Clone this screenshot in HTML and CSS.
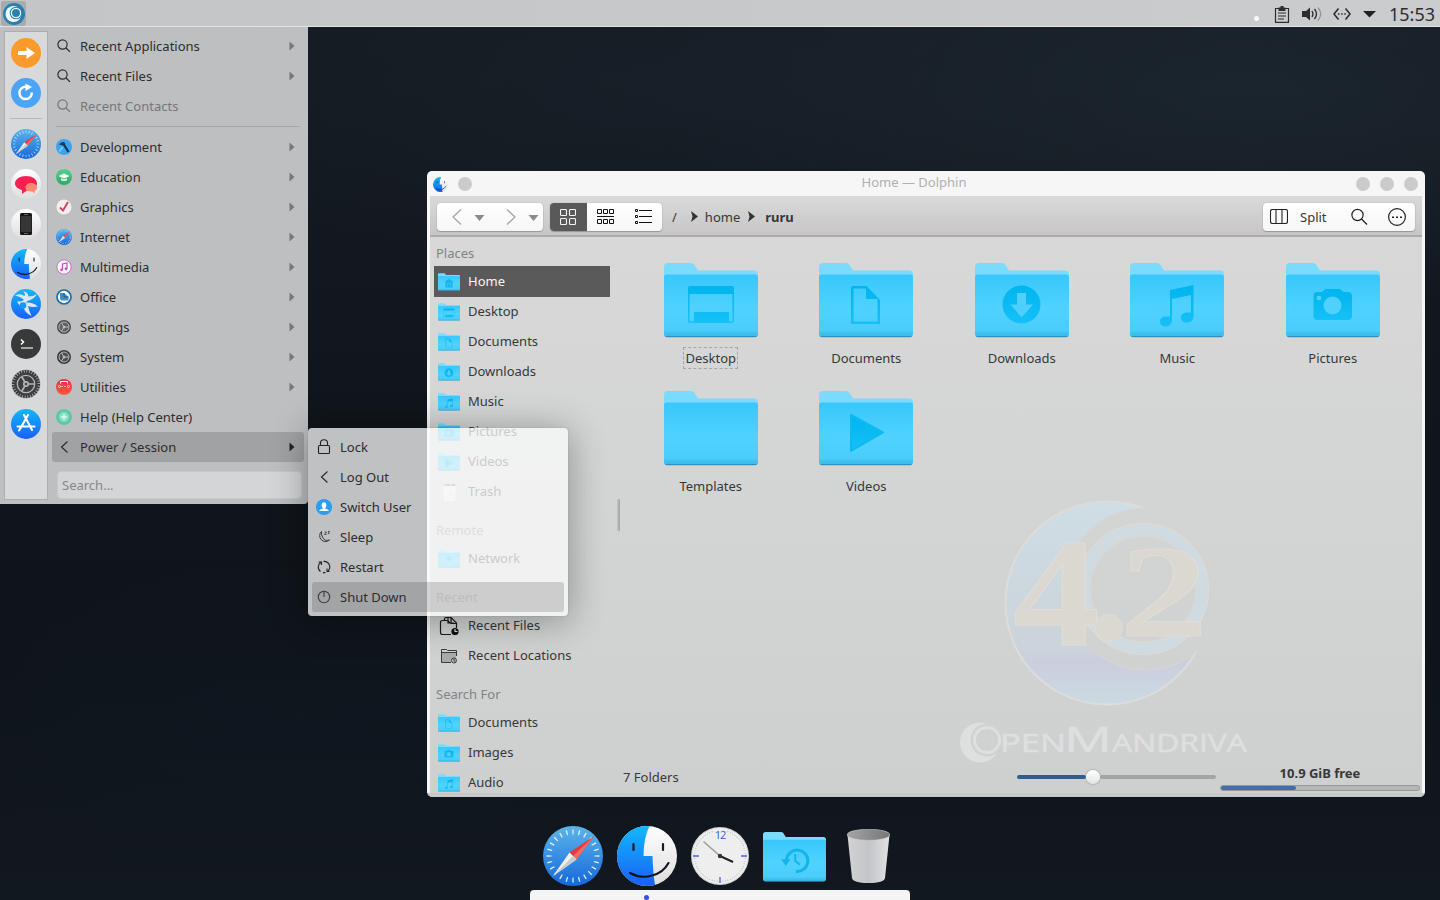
FILE: index.html
```html
<!DOCTYPE html>
<html lang="en">
<head>
<meta charset="utf-8">
<title>Desktop</title>
<link rel="stylesheet" href="styles.css">
</head>
<body>
<svg class="defs" width="0" height="0" aria-hidden="true">
  <defs>
    <linearGradient id="gFolder" x1="0" y1="0" x2="0" y2="1"><stop offset="0" stop-color="#38c7fc"/><stop offset=".55" stop-color="#50d2ff"/><stop offset=".9" stop-color="#4acdfb"/><stop offset=".93" stop-color="#3fc2f2"/><stop offset="1" stop-color="#3abae8"/></linearGradient>
    <linearGradient id="gGlyph" x1="0" y1="0" x2="0" y2="1"><stop offset="0" stop-color="#00b5ee"/><stop offset="1" stop-color="#16c0f8"/></linearGradient>
    <linearGradient id="gSafari" x1="0" y1="0" x2="0" y2="1"><stop offset="0" stop-color="#5bb5ea"/><stop offset="1" stop-color="#1668dc"/></linearGradient>
    <linearGradient id="gBlue" x1="0" y1="0" x2="0" y2="1"><stop offset="0" stop-color="#12b8fd"/><stop offset="1" stop-color="#1a60f5"/></linearGradient>
    <linearGradient id="gWhite" x1="0" y1="0" x2="0" y2="1"><stop offset="0" stop-color="#fff"/><stop offset="1" stop-color="#dfdcdc"/></linearGradient>
    <linearGradient id="gPink" x1="0" y1="0" x2="0" y2="1"><stop offset="0" stop-color="#ff1c55"/><stop offset="1" stop-color="#f5254b"/></linearGradient>
    <linearGradient id="gGreen" x1="0" y1="0" x2="0" y2="1"><stop offset="0" stop-color="#52d18a"/><stop offset="1" stop-color="#2fa866"/></linearGradient>
    <linearGradient id="gRed" x1="0" y1="0" x2="0" y2="1"><stop offset="0" stop-color="#e8304d"/><stop offset="1" stop-color="#fb5a38"/></linearGradient>
    <linearGradient id="gBin" x1="0" y1="0" x2="1" y2="0"><stop offset="0" stop-color="#d2d2d4"/><stop offset=".5" stop-color="#c4c5c8"/><stop offset="1" stop-color="#e2e2e3"/></linearGradient>
    <linearGradient id="gBinIn" x1="0" y1="0" x2="1" y2="0"><stop offset="0" stop-color="#a5a5a5"/><stop offset="1" stop-color="#767676"/></linearGradient>
    <linearGradient id="gLogo" x1="0" y1="0" x2="0" y2="1"><stop offset="0" stop-color="#cfdde4"/><stop offset=".7" stop-color="#cbd4da"/><stop offset=".8" stop-color="#cbcedd"/><stop offset="1" stop-color="#cbdae3"/></linearGradient>
  </defs>

  <symbol id="folder" viewBox="0 0 94 75">
    <path d="M0 16V4Q0 0 4 0H27Q29 0 30.5 2L34 7.5H90Q94 7.5 94 11.5V20H0Z" fill="#7adbfd"/>
    <path d="M0 14Q0 11.500 3 11.500H91Q94 11.500 94 14V71Q94 74 91 74H3Q0 74 0 71Z" fill="url(#gFolder)"/>
    <path d="M.8 73Q1.500 74.200 3.500 74.200H90.500Q92.500 74.200 93.200 73Z" fill="#3192c0"/>
  </symbol>
  <symbol id="g-desktop" viewBox="0 0 94 75"><path d="M26 23H68Q70 23 70 25V58Q70 60 68 60H26Q24 60 24 58V25Q24 23 26 23ZM25.500 31V57.500L26 58.500H30V49H65V58.500H68.500V31Z" fill="url(#gGlyph)" fill-rule="evenodd"/></symbol>
  <symbol id="g-doc" viewBox="0 0 94 75"><path d="M34 23H47.500L61 37V61H32V25Q32 23 34 23ZM34.500 25.500V58.500H58.500V36H47V25.500Z" fill="url(#gGlyph)" fill-rule="evenodd"/></symbol>
  <symbol id="g-down" viewBox="0 0 94 75"><circle cx="46.500" cy="41.500" r="19" fill="url(#gGlyph)"/><path d="M42 30H51V41.500H58L46.500 54.500L35.500 41.500H42Z" fill="#4fcffd"/></symbol>
  <symbol id="g-music" viewBox="0 0 94 75"><path d="M40 27L63.500 22V53C63.500 57 61 59.500 57 59.500C53 59.500 51 57.500 51 54.500C51 51 54 49.500 57 49.500H61V32L42 36V57C42 61 39 63.500 35.500 63.500C32 63.500 30 61.500 30 58.500C30 55 33 53.500 36 53.500H40Z" fill="url(#gGlyph)"/></symbol>
  <symbol id="g-camera" viewBox="0 0 94 75"><path d="M31 29H36L39.500 26H54L57.500 29H62Q66 29 66 33V53Q66 57 62 57H31.500Q27.500 57 27.500 53V33Q27.500 29 31 29Z" fill="url(#gGlyph)"/><circle cx="46.500" cy="42.500" r="9" fill="#50d0fd"/><circle cx="33" cy="35" r="2.300" fill="#50d0fd"/></symbol>
  <symbol id="g-play" viewBox="0 0 94 75"><path d="M32 24L64 41.500L32 60Z" fill="url(#gGlyph)" stroke="#0bbaf2" stroke-width="2" stroke-linejoin="round"/></symbol>
  <symbol id="g-home" viewBox="0 0 94 75"><path d="M47 24L66 38H62V61H32V38H28Z" fill="#14b4ea"/><path d="M38 42H56M41 42V58M53 42V58" stroke="#3fc8f8" stroke-width="3"/></symbol>
  <symbol id="g-net" viewBox="0 0 94 75"><path d="M32 32Q47 22 62 32L47 48Z" fill="#14b9f0"/></symbol>
  <symbol id="g-history" viewBox="0 0 94 75"><path d="M35 42A16 16 0 1 1 49 59" fill="none" stroke="#12b5ea" stroke-width="4.500"/><path d="M27 41H41L34 51Z" fill="#12b5ea"/><path d="M48 33V43L55 49" fill="none" stroke="#12b5ea" stroke-width="3"/></symbol>

  <symbol id="safari" viewBox="0 0 60 60">
    <circle cx="30" cy="30" r="30" fill="url(#gSafari)"/>
    <circle cx="30" cy="30" r="24" fill="none" stroke="#e9f3fc" stroke-width="5" pathLength="240" stroke-dasharray="2 8" stroke-dashoffset="1"/>
    <path d="M51 10L33.500 33.500L26.500 26.500Z" fill="#e53b3d"/><path d="M51 10L30 30L33.500 33.500Z" fill="#f36a62"/>
    <path d="M10 50L33.500 33.500L26.500 26.500Z" fill="#f4f2ee"/><path d="M10 50L30 30L33.500 33.500Z" fill="#c5cbd0"/>
  </symbol>
  <symbol id="finder" viewBox="0 0 60 60">
    <circle cx="30" cy="30" r="30" fill="url(#gWhite)"/>
    <path d="M32.500 .1A30 30 0 1 0 38 58.900Q36 47 35.500 30H26.500Q26.500 12 32.500 .1Z" fill="url(#gBlue)"/>
    <path d="M16.500 18V24M46 18V24" stroke="#111b2e" stroke-width="2.200" stroke-linecap="round"/>
    <path d="M13 47Q24 53 35 49.500Q46 47 51.500 37" fill="none" stroke="#10131c" stroke-width="2.100" stroke-linecap="round"/>
  </symbol>
  <symbol id="cog" viewBox="0 0 30 30">
    <circle cx="15" cy="15" r="14.500" fill="#a9abac"/><circle cx="15" cy="15" r="12.500" fill="none" stroke="#333537" stroke-width="3" pathLength="60" stroke-dasharray="1.300 .7"/>
    <circle cx="15" cy="15" r="11.500" fill="#3c3e40"/><circle cx="15" cy="15" r="8.700" fill="#3c3e40" stroke="#b4b6b7" stroke-width="1.300"/>
    <path d="M15 15H23.500M15 15L10.700 7.600M15 15L10.700 22.400" stroke="#b4b6b7" stroke-width="1.700"/><circle cx="15" cy="15" r="3" fill="#b4b6b7"/><circle cx="15" cy="15" r="1.300" fill="#444"/>
  </symbol>
  <symbol id="cog-small" viewBox="0 0 16 16">
    <circle cx="8" cy="8" r="7" fill="#35383a"/><circle cx="8" cy="8" r="5" fill="#4b4e50" stroke="#b9bbbc" stroke-width="1"/>
    <path d="M8 8H12.800M8 8L5.600 4M8 8L5.600 12" stroke="#b9bbbc" stroke-width="1"/><circle cx="8" cy="8" r="1.500" fill="#b9bbbc"/>
  </symbol>
  <symbol id="lens" viewBox="0 0 16 16"><circle cx="6.500" cy="6.500" r="4.600" fill="none" stroke="currentColor" stroke-width="1.200"/><path d="M9.800 9.800L14 13.900" stroke="currentColor" stroke-width="1.300"/></symbol>
  <symbol id="back" viewBox="0 0 16 16"><path d="M11.500 2.500L5.500 8L11.500 13.500" fill="none" stroke="currentColor" stroke-width="1.200"/></symbol>
  <symbol id="arrow" viewBox="0 0 6 10"><path d="M.5 .5L5.500 5L.5 9.500Z" fill="currentColor"/></symbol>
</svg>

<main class="desktop">

  <section class="window">
    <header class="titlebar">
      <svg class="app-icon"><use href="#finder"/></svg>
      <span class="knob"></span>
      <h1 class="title">Home — Dolphin</h1>
      <span class="knob"></span><span class="knob"></span><span class="knob"></span>
    </header>
    <div class="toolbar">
      <div class="group nav-group">
        <svg width="106" height="28" viewBox="0 0 106 28"><path d="M24 6.500L16 14L24 21.500M70 6.500L78 14L70 21.500" fill="none" stroke="#a3a3a3" stroke-width="1.200"/><path d="M37.500 12H47.500L42.500 18ZM91.500 12H101.500L96.500 18Z" fill="#8b8b8b"/></svg>
      </div>
      <div class="group view-group">
        <div class="view active"><svg width="16" height="16" viewBox="0 0 16 16" fill="none" stroke="#f4f4f4" stroke-width="1.100"><rect x=".5" y=".5" width="6" height="6" rx="1"/><rect x="9.500" y=".5" width="6" height="6" rx="1"/><rect x=".5" y="9.500" width="6" height="6" rx="1"/><rect x="9.500" y="9.500" width="6" height="6" rx="1"/></svg></div>
        <div class="view"><svg width="17" height="16" viewBox="0 0 17 16" fill="none" stroke="#111"><path d="M.5 .5H4.500V4.500H.5ZM6.500 .5H10.500V4.500H6.500ZM12.500 .5H16.500V4.500H12.500ZM0 7.500H17M.5 10.500H4.500V14.500H.5ZM6.500 10.500H10.500V14.500H6.500ZM12.500 10.500H16.500V14.500H12.500Z"/></svg></div>
        <div class="view"><svg width="17" height="16" viewBox="0 0 17 16" fill="none" stroke="#111"><path d="M.5 .5H2.500V2.500H.5ZM.5 6.500H2.500V8.500H.5ZM.5 12.500H2.500V14.500H.5ZM4 1.500H17M4 7.500H17M4 13.500H17"/></svg></div>
      </div>
      <nav class="crumbs">
        <span>/</span>
        <svg class="c1" width="7" height="11" viewBox="0 0 7 11"><path d="M0 0L7 5.500L0 11L1.500 5.500Z" fill="#333"/></svg>
        <span>home</span>
        <svg class="c2" width="7" height="11" viewBox="0 0 7 11"><path d="M0 0L7 5.500L0 11L1.500 5.500Z" fill="#333"/></svg>
        <b>ruru</b>
      </nav>
      <div class="group tools-group">
        <svg width="18" height="16" viewBox="0 0 18 16" fill="none" stroke="#222" stroke-width="1.100"><rect x=".5" y=".5" width="17" height="14" rx="2"/><path d="M6 .5V14.500M12 .5V14.500"/></svg>
        <span>Split</span>
        <svg class="find" width="18" height="18" viewBox="0 0 18 18" fill="none" stroke="#222" stroke-width="1.200"><circle cx="7.500" cy="7" r="5.600"/><path d="M11.500 11L17 16.500"/></svg>
        <svg width="18" height="18" viewBox="0 0 18 18"><circle cx="9" cy="9" r="8.400" fill="none" stroke="#222" stroke-width="1.200"/><path d="M4 8.500H6V10H4ZM8 8.500H10V10H8ZM12 8.500H14V10H12Z" fill="#222"/></svg>
      </div>
    </div>
    <div class="body">
      <aside class="places">
        <h2 class="first">Places</h2>
        <div class="place selected"><svg><use href="#folder"/><use href="#g-home"/></svg>Home</div>
        <div class="place"><svg><use href="#folder"/><use href="#g-desktop"/></svg>Desktop</div>
        <div class="place"><svg><use href="#folder"/><use href="#g-doc"/></svg>Documents</div>
        <div class="place"><svg><use href="#folder"/><use href="#g-down"/></svg>Downloads</div>
        <div class="place"><svg><use href="#folder"/><use href="#g-music"/></svg>Music</div>
        <div class="place"><svg><use href="#folder"/><use href="#g-camera"/></svg>Pictures</div>
        <div class="place"><svg><use href="#folder"/><use href="#g-play"/></svg>Videos</div>
        <div class="place"><svg viewBox="0 0 22 18"><path d="M5 3H18L17 18H6Z" fill="#ececec"/><path d="M5 1L8 2L10 .5L13 2L15 .5L18 2L17 3L13 2.500L9 3L6 2.500Z" fill="#6f6f6f"/><path d="M12 8L14 10L11 13" stroke="#d4d4d4" fill="none"/></svg>Trash</div>
        <h2>Remote</h2>
        <div class="place"><svg><use href="#folder"/><use href="#g-net"/></svg>Network</div>
        <h2>Recent</h2>
        <div class="place"><svg viewBox="0 0 22 18" fill="none" stroke="#1b1b1b" stroke-width="1.200"><path d="M13 17.500H4.500Q2.500 17.500 2.500 15.500V5.500Q2.500 3.500 4.500 3.500H6.500V2.500Q6.500 .5 8.500 .5H13L18.500 6V11M10 .5V6H16M13 .5V6.500H18.500M6.500 3.500H10L12 6"/><circle cx="17" cy="14.500" r="3.600" fill="#111" stroke="none"/><path d="M17 12V14.500H19.500" stroke="#ddd"/></svg>Recent Files</div>
        <div class="place"><svg viewBox="0 0 22 18" fill="none" stroke="#3b3b3b"><path d="M13 15.500H3.500V2.500H8.500L9.500 3.500H18.500V9M3.500 5.500H18.500" /><path d="M4 6H18V15H4Z" fill="#a9aaab" stroke="none"/><circle cx="16" cy="13.500" r="2.500" fill="#c4c4c4"/><path d="M16 12V14H17.500"/></svg>Recent Locations</div>
        <h2>Search For</h2>
        <div class="place"><svg><use href="#folder"/><use href="#g-doc"/></svg>Documents</div>
        <div class="place"><svg><use href="#folder"/><use href="#g-camera"/></svg>Images</div>
        <div class="place"><svg><use href="#folder"/><use href="#g-music"/></svg>Audio</div>
      </aside>
      <div class="splitter"></div>
      <div class="content">
        <svg class="watermark" width="300" height="280" viewBox="950 495 300 280">
          <defs><mask id="mCres"><rect x="950" y="495" width="300" height="280" fill="#fff"/><circle cx="1144" cy="589" r="81" fill="#000"/></mask></defs>
          <circle cx="1106" cy="603" r="101.500" fill="url(#gLogo)" stroke="#dcdddb" stroke-width="2" mask="url(#mCres)"/>
          <path d="M1150 508.200A81 81 0 1 0 1198 650" fill="none" stroke="#d9d6d3"/>
          <circle cx="1142" cy="589" r="59.500" fill="none" stroke="#cfdbe1" stroke-width="12"/>
          <circle cx="1142" cy="589" r="65.500" fill="none" stroke="#dadad6" stroke-width="1.500"/>
          <circle cx="1142" cy="589" r="53" fill="none" stroke="#d9d9d5" stroke-width="1.500"/>
          <g class="version">
            <text transform="translate(1012 644.500) scale(1.120 1)" font-size="155">4</text>
            <circle cx="1108" cy="628" r="13.500"/>
            <text transform="translate(1119 636) scale(1.340 1)" font-size="131">2</text>
          </g>
          <circle cx="979" cy="742.500" r="20" fill="#dedfdf"/>
          <circle cx="986" cy="740" r="16.500" fill="#d0d1d1"/>
          <circle cx="986" cy="740" r="12.500" fill="none" stroke="#dedfdf" stroke-width="3"/>
          <g class="brand">
            <text x="999" y="752" font-size="25" textLength="66" lengthAdjust="spacingAndGlyphs">PEN</text>
            <text x="1063" y="752" font-size="34" textLength="48" lengthAdjust="spacingAndGlyphs">M</text>
            <text x="1111" y="752" font-size="25" textLength="135" lengthAdjust="spacingAndGlyphs">ANDRIVA</text>
          </g>
        </svg>
        <div class="files">
          <figure class="file focus"><svg><use href="#folder"/><use href="#g-desktop"/></svg><figcaption>Desktop</figcaption></figure>
          <figure class="file"><svg><use href="#folder"/><use href="#g-doc"/></svg><figcaption>Documents</figcaption></figure>
          <figure class="file"><svg><use href="#folder"/><use href="#g-down"/></svg><figcaption>Downloads</figcaption></figure>
          <figure class="file"><svg><use href="#folder"/><use href="#g-music"/></svg><figcaption>Music</figcaption></figure>
          <figure class="file"><svg><use href="#folder"/><use href="#g-camera"/></svg><figcaption>Pictures</figcaption></figure>
          <figure class="file"><svg><use href="#folder"/></svg><figcaption>Templates</figcaption></figure>
          <figure class="file"><svg><use href="#folder"/><use href="#g-play"/></svg><figcaption>Videos</figcaption></figure>
        </div>
        <footer class="status">
          <span class="count">7 Folders</span>
          <div class="slider"><span class="fill"></span><span class="handle"></span><span class="rest"></span></div>
          <div class="space"><b>10.9 GiB free</b><div class="bar"><span></span></div></div>
        </footer>
      </div>
    </div>
  </section>

  <header class="panel">
    <div class="launcher"><svg width="22" height="22" viewBox="0 0 22 22"><circle cx="11" cy="11" r="11" fill="#2a7fb2"/><circle cx="10.500" cy="11" r="8" fill="#f4f8fa"/><circle cx="13" cy="10" r="6.300" fill="#2a7fb2"/><circle cx="13" cy="10" r="4.600" fill="none" stroke="#f4f8fa" stroke-width="1.300"/></svg></div>
    <div class="tray">
      <span class="dot"></span>
      <svg class="clip" width="16" height="17" viewBox="0 0 16 17"><path d="M1.500 2.500H14.500V16.300H1.500Z" fill="none" stroke="#2b2d2f" stroke-width="1.200"/><path d="M4.500 1.500H6.500V0H9.500V1.500H11.500V5H4.500ZM4 6.500H12V7.500H4ZM4 9.500H12V10.500H4ZM4 12.500H10V13.500H4Z" fill="#2b2d2f"/></svg>
      <svg class="vol" width="21" height="16" viewBox="0 0 21 16"><path d="M0 5H4L8 1.500V14.500L4 11H0Z" fill="#2b2d2f"/><path d="M10 5Q12 8 10 11M12.500 3Q16.500 8 12.500 13" fill="none" stroke="#2b2d2f" stroke-width="1.300"/><path d="M16 1.500Q21.500 8 16 14.500" fill="none" stroke="#909294" stroke-width="1.200"/></svg>
      <svg class="net" width="18" height="14" viewBox="0 0 18 14"><path d="M5.500 1.500L1 7L5.500 12.500M12.500 1.500L17 7L12.500 12.500" fill="none" stroke="#2b2d2f" stroke-width="1.600"/><path d="M5 6.200H6.500V7.700H5ZM8.200 6.200H9.700V7.700H8.200ZM11.300 6.200H12.800V7.700H11.300Z" fill="#2b2d2f"/></svg>
      <svg class="tri" width="13" height="7" viewBox="0 0 13 7"><path d="M0 0H13L6.500 6.500Z" fill="#1f2123"/></svg>
      <time>15:53</time>
    </div>
  </header>

  <section class="menu">
    <aside class="favorites">
      <svg viewBox="0 0 30 30"><circle cx="15" cy="15" r="15" fill="#fc9a2b"/><path d="M7 13H15.500V9L24 15L15.500 21V17H7Z" fill="#fff"/></svg>
      <svg viewBox="0 0 30 30"><circle cx="15" cy="15" r="15" fill="#4ba4f5"/><path d="M20.800 14.500A6.200 6.200 0 1 1 15 8.700" fill="none" stroke="#fff" stroke-width="2.500"/><path d="M14.500 5.500L21 9L14.500 13Z" fill="#fff"/></svg>
      <hr>
      <svg><use href="#safari"/></svg>
      <svg viewBox="0 0 30 30"><circle cx="15" cy="15" r="15" fill="url(#gWhite)"/><path d="M15 7C21 7 26 10 26 14.500C26 19 21 21.500 16 21.500L11 25V21C7 20 4 17.500 4 14.500C4 10 9 7 15 7Z" fill="url(#gPink)"/><path d="M20 14C23.500 14 26 16 26 18.500C26 20 25 21.500 23.500 22V24.500L21 22.500C16.500 22.500 14.500 21 14.500 18.500C14.500 16 17 14 20 14Z" fill="#ff8a70"/></svg>
      <svg viewBox="0 0 30 30"><circle cx="15" cy="15" r="15" fill="url(#gWhite)"/><rect x="9" y="4" width="12" height="22" rx="1.500" fill="#161616"/><path d="M9.700 7H20.300V23H9.700Z" fill="#353638"/><path d="M13 24.500H17M13 5.500H17" stroke="#666"/></svg>
      <svg><use href="#finder"/></svg>
      <svg viewBox="0 0 30 30"><circle cx="15" cy="15" r="15" fill="url(#gBlue)"/><path d="M4 6.500Q9 4 13.500 7Q15 4 11.500 2.500Q17 2.500 17.500 7.500Q22 7.500 26 5Q24 9.500 16.500 12L14.500 13.500Q22 13 27 17.500Q21 18.500 17 17Q18 22 20.500 27Q14 23.500 13 19.500Q9 18 6 12.500Q10 13 13 11Q10 7.500 4 6.500Z" fill="#dce6ee"/><circle cx="12" cy="16.500" r="3.300" fill="#1796f5"/></svg>
      <svg viewBox="0 0 30 30"><circle cx="15" cy="15" r="15" fill="#383939"/><path d="M10 10.500L12.500 13L10 15.500" fill="none" stroke="#fff" stroke-width="1.500"/><path d="M10 19H22" stroke="#d6d6d6" stroke-width="1.400"/></svg>
      <svg><use href="#cog"/></svg>
      <svg viewBox="0 0 30 30"><circle cx="15" cy="15" r="15" fill="url(#gBlue)"/><path d="M13 6L21 21M17 6L9 20M6.500 17.500H17M20 17.500H23.500M9 20L8 21.500" fill="none" stroke="#fff" stroke-width="2.100" stroke-linecap="round"/></svg>
    </aside>
    <div class="menu-main">
      <div class="item"><svg><use href="#lens"/></svg><span>Recent Applications</span><svg class="more"><use href="#arrow"/></svg></div>
      <div class="item"><svg><use href="#lens"/></svg><span>Recent Files</span><svg class="more"><use href="#arrow"/></svg></div>
      <div class="item disabled"><svg><use href="#lens"/></svg><span>Recent Contacts</span></div>
      <hr>
      <div class="item"><svg viewBox="0 0 16 16"><circle cx="8" cy="8" r="8" fill="#37a5f3"/><path d="M3 5.500Q4.500 2.500 8 3L9.500 5L7 6.500Z" fill="#263746"/><path d="M7.500 5L12.500 13" fill="none" stroke="#20323f" stroke-width="2.200"/><path d="M6.500 8L3.500 12.500" stroke="#8ecbf2" stroke-width="1.500"/></svg><span>Development</span><svg class="more"><use href="#arrow"/></svg></div>
      <div class="item"><svg viewBox="0 0 16 16"><circle cx="8" cy="8" r="8" fill="url(#gGreen)"/><path d="M2.500 7L8 4.500L13.500 7L8 9.500Z" fill="#fff"/><path d="M5 9.200V11.300Q8 12.800 11 11.300V9.200L8 10.500Z" fill="#e9f7ee"/></svg><span>Education</span><svg class="more"><use href="#arrow"/></svg></div>
      <div class="item"><svg viewBox="0 0 16 16"><circle cx="8" cy="8" r="7.500" fill="#f2eeee"/><path d="M4 8.500L7 11.500L12 3" fill="none" stroke="#d6405c" stroke-width="1.900"/></svg><span>Graphics</span><svg class="more"><use href="#arrow"/></svg></div>
      <div class="item"><svg><use href="#safari"/></svg><span>Internet</span><svg class="more"><use href="#arrow"/></svg></div>
      <div class="item"><svg viewBox="0 0 16 16"><circle cx="8" cy="8" r="7.200" fill="#fbf5fb" stroke="#c271c9" stroke-width="1"/><path d="M6.500 10.700V5L11 4V9.700" fill="none" stroke="#c14fb8" stroke-width="1.200"/><circle cx="5.500" cy="10.800" r="1.400" fill="#d6519a"/><circle cx="10" cy="9.800" r="1.400" fill="#b04fc8"/></svg><span>Multimedia</span><svg class="more"><use href="#arrow"/></svg></div>
      <div class="item"><svg viewBox="0 0 16 16"><circle cx="8" cy="8" r="7" fill="#f2f6f8" stroke="#1f6ea5" stroke-width="1.700"/><path d="M4 4H8L12.500 8V11.500H5.500L4 10Z" fill="#3f93c4"/><path d="M8 4V8H12.500" stroke="#1d5680" fill="none"/></svg><span>Office</span><svg class="more"><use href="#arrow"/></svg></div>
      <div class="item"><svg class="dim"><use href="#cog-small"/></svg><span>Settings</span><svg class="more"><use href="#arrow"/></svg></div>
      <div class="item"><svg><use href="#cog-small"/></svg><span>System</span><svg class="more"><use href="#arrow"/></svg></div>
      <div class="item"><svg viewBox="0 0 16 16"><circle cx="8" cy="8" r="8" fill="url(#gRed)"/><path d="M4.500 4.500V2.500H11.500V4.500" fill="none" stroke="#fff"/><path d="M5 7.500H11" stroke="#f9a0a0" stroke-dasharray="2 1"/><circle cx="3.500" cy="7.500" r="1" fill="none" stroke="#fff" stroke-width=".7"/><circle cx="12.500" cy="7.500" r="1" fill="none" stroke="#fff" stroke-width=".7"/></svg><span>Utilities</span><svg class="more"><use href="#arrow"/></svg></div>
      <div class="item"><svg viewBox="0 0 16 16"><circle cx="8" cy="8" r="8" fill="#5cc8ab"/><circle cx="8" cy="8" r="5" fill="#8adcc4"/><path d="M8 5V11M5 8H11" stroke="#d9f6ee" stroke-width="1.500"/></svg><span>Help (Help Center)</span></div>
      <div class="item hover"><svg><use href="#back"/></svg><span>Power / Session</span><svg class="more"><use href="#arrow"/></svg></div>
      <div class="search">Search...</div>
    </div>
  </section>

  <section class="submenu">
    <div class="item"><svg viewBox="0 0 16 16" fill="none" stroke="#222" stroke-width="1.100"><rect x="2.500" y="6.500" width="11" height="8" rx="1"/><path d="M4.500 6.500V4Q4.500 .8 8 .8T11.500 4V6.500"/></svg><span>Lock</span></div>
    <div class="item"><svg><use href="#back"/></svg><span>Log Out</span></div>
    <div class="item"><svg viewBox="0 0 16 16"><circle cx="8" cy="8" r="8" fill="#2a9df4"/><ellipse cx="8" cy="6.200" rx="2.300" ry="2.900" fill="#fff"/><path d="M3 12Q3.500 10.200 7 9.500V8H9V9.500Q12.500 10.200 13 12Z" fill="#fff"/></svg><span>Switch User</span></div>
    <div class="item"><svg viewBox="0 0 16 16" fill="none" stroke="#3a3a3a"><path d="M5.500 2.500A5.800 5.800 0 1 0 13.500 11Q9 12.500 7 9Q5 6 5.500 2.500Z"/><path d="M8.500 3H10.500L8.500 5.500H10.500M12 2.500H13.500L12 4.500H13.500" stroke-width=".8"/></svg><span>Sleep</span></div>
    <div class="item"><svg viewBox="0 0 16 16" fill="none" stroke="#222" stroke-width="1.100"><path d="M5.500 3A5.600 5.600 0 0 0 4.500 12.500M7.500 2.400A5.600 5.600 0 0 1 12 12M7 13.600Q8.500 13.800 9.500 13.400M2.500 3H5.500V6M13.500 12.500H11V9.500"/></svg><span>Restart</span></div>
    <div class="item hover"><svg viewBox="0 0 16 16" fill="none" stroke="#3a3a3a" stroke-width="1.100"><circle cx="8" cy="8" r="5.700"/><path d="M8 2V8"/></svg><span>Shut Down</span></div>
  </section>

  <nav class="dock">
    <div class="dock-icons">
      <svg width="60" height="60"><use href="#safari"/></svg>
      <svg width="60" height="60"><use href="#finder"/></svg>
      <svg class="clock" width="58" height="58" viewBox="0 0 58 58">
        <circle cx="29" cy="29" r="29" fill="#cfcfcf"/><circle cx="29" cy="29" r="28" fill="#eeeeef"/>
        <circle cx="29" cy="29" r="25.500" fill="none" stroke="#666" stroke-width="1.200" pathLength="120" stroke-dasharray=".5 1.500" stroke-dashoffset=".25" opacity=".5"/>
        <path d="M2 29H8M50 29H56M29 50V56" stroke="#4a5fe0" stroke-width="1.300"/>
        <rect x="23" y="2" width="12" height="10" fill="#eeeeef"/>
        <text class="twelve" x="29" y="12" text-anchor="middle">12</text>
        <path d="M29 29L12.500 14.500" stroke="#9a9a9a" stroke-width="1.500"/><path d="M29 29L42 35" stroke="#222" stroke-width="2"/><circle cx="29" cy="29" r="2.200" fill="#333"/>
      </svg>
      <svg class="dock-folder" viewBox="0 0 94 75" preserveAspectRatio="none" width="63" height="50"><use href="#folder"/><use href="#g-history"/></svg>
      <svg class="bin" width="43" height="54" viewBox="0 0 43 54"><path d="M.5 6L5 49Q6 54 21.500 54T38 49L42.500 6Z" fill="url(#gBin)"/><ellipse cx="21.500" cy="5.800" rx="21.300" ry="5.600" fill="url(#gBinIn)" stroke="#d4d4d4" stroke-width=".6"/></svg>
    </div>
    <div class="shelf"><span></span></div>
  </nav>
</main>
</body>
</html>
```
FILE: styles.css
```css
* { box-sizing: border-box; }
body { margin: 0; font: 13px/18px "Noto Sans", sans-serif; color: #2b2d2f; }
.defs { position: absolute; }
svg { flex: none; display: block; }
hr { border: 0; margin: 0; }
h1, h2, figure { margin: 0; font-size: 13px; font-weight: 400; }

.desktop {
  position: relative; width: 1440px; height: 900px; overflow: hidden;
  background:
    radial-gradient(ellipse 600px 220px at 1250px 90px, rgba(34, 46, 56, .55), transparent),
    radial-gradient(ellipse 500px 180px at 650px 90px, rgba(27, 36, 46, .45), transparent),
    radial-gradient(ellipse 400px 160px at 300px 720px, rgba(17, 25, 36, .4), transparent),
    linear-gradient(#151c23, #10151b 50%, #0e141a 75%, #12181f);
}

.panel {
  position: absolute; top: 0; left: 0; width: 100%; height: 27px;
  display: flex; align-items: center; justify-content: space-between;
  background: linear-gradient(90deg, #c3c5c7, #c8c9ca 60%, #cbcccd);
  border-bottom: 1px solid #e2e3e3;
}
.launcher { width: 25px; height: 25px; margin-left: 1px; padding-top: 1px; display: grid; place-items: center; background: #a7abad; border-radius: 3px; }
.tray { display: flex; align-items: center; height: 26px; padding: 2px 5px 0 0; }
.tray .dot { width: 5px; height: 5px; border-radius: 50%; background: #f8f8f8; margin: 8px 15px 0 0; }
.clip { margin-right: 12px; }
.vol { margin-right: 10px; }
.net { margin-right: 12px; }
.tri { margin-right: 13px; }
.tray time { font-size: 18px; line-height: 24px; width: 46px; white-space: nowrap; }

.menu {
  position: absolute; left: 0; top: 27px; width: 308px; height: 477px;
  display: flex; padding: 4px;
  background: #bebfc1; border-bottom-right-radius: 4px;
}
.favorites {
  width: 44px; height: 469px; padding: 6px 0; display: flex; flex-direction: column; align-items: center; gap: 10px;
  background: #d8d9db; border: 1px solid #abadaf;
}
.favorites svg { width: 30px; height: 30px; }
.favorites hr { width: 32px; height: 1px; background: #b4b6b8; }
.menu-main { flex: 1; padding-left: 4px; }
.menu-main hr { height: 1px; margin: 5px 4px; background: #a5a7a9; }
.item { display: flex; align-items: center; height: 30px; padding: 0 10px 0 4px; border-radius: 3px; }
.item svg { width: 16px; height: 16px; margin-right: 8px; }
.item span { flex: 1; }
.item .more { width: 6px; height: 10px; margin: 0 -1px 0 0; color: #75777a; }
.item.disabled { color: #75777a; }
.item.hover { background: rgba(0, 0, 0, .15); }
.item.hover .more { color: #222; }
.item .dim { opacity: .85; }
.search { height: 28px; margin: 9px 2px 0 5px; padding: 4px; color: #85878a; background: #d4d5d7; border: 1px solid #c7c8ca; border-radius: 4px; }

.submenu {
  position: absolute; left: 308px; top: 428px; width: 260px; height: 188px; padding: 4px;
  background: rgba(251, 251, 251, .75); border-radius: 4px;
  box-shadow: 0 0 1px rgba(0, 0, 0, .4), 0 4px 36px 2px rgba(0, 0, 0, .32);
}

.window {
  position: absolute; left: 427px; top: 171px; width: 998px; height: 626px; overflow: hidden;
  display: flex; flex-direction: column; border-radius: 5px;
  background: linear-gradient(#f6f6f6 622px, #c7c9ca 622px); padding: 0 3px;
  color: #36383a;
}
.titlebar { display: flex; align-items: center; height: 25px; padding: 1px 4px 0 3px; gap: 10px; }
.app-icon { width: 15px; height: 15px; }
.knob { width: 14px; height: 14px; border-radius: 50%; background: #cbcbcb; }
.title { flex: 1; text-align: center; color: #b0b0b0; line-height: 20px; padding: 0 10px 4px; }
.toolbar {
  height: 41px; flex: none; display: flex; align-items: center; padding: 0 7px;
  background: linear-gradient(#dadada, #c7c5c6); border-bottom: 2px solid #ababab;
}
.group { height: 28px; margin-top: 2px; display: flex; align-items: center; background: linear-gradient(#fff, #f6f6f6); border-radius: 4px; box-shadow: 0 0 1px #888, 0 1px 1px #999; overflow: hidden; }
.nav-group { width: 106px; }
.view-group { width: 112px; margin-left: 7px; }
.view { flex: 1; height: 28px; display: grid; place-items: center; }
.view.active svg { margin-right: 1px; }
.view.active { background: #595959; }
.crumbs { flex: 1; display: flex; align-items: center; margin-left: 10px; padding-top: 3px; }
.crumbs svg { margin-top: -2px; }
.crumbs .c1 { margin-left: 14px; margin-right: 7px; }
.crumbs .c2 { margin-left: 8px; margin-right: 10px; }
.tools-group { width: 152px; padding-left: 7px; }
.tools-group span { margin: 0 23px 0 12px; width: 27px; }
.find { margin-right: 20px; }

.body {
  flex: none; height: 560px; display: flex;
  background: linear-gradient(#d7d8d7, #d3d4d4 50%, #cecfcf 556px, #c7c9ca 556px);
}
.places { width: 187px; height: 556px; padding-left: 4px; overflow: hidden; }
.places h2 { height: 37px; padding: 15px 0 0 2px; color: #818384; }
.places h2.first { height: 29px; padding-top: 7px; }
.place { display: flex; align-items: center; height: 30px; padding-left: 4px; width: 176px; }
.place svg { width: 22px; height: 18px; margin: 2px 8px 0 0; }
.place.selected { background: #5a5a5a; color: #f6f6f6; box-shadow: 0 1px #5a5a5a; }
.splitter { width: 3px; height: 32px; margin-top: 262px; background: linear-gradient(90deg, #c4c4c4, #a2a3a3); border-radius: 1px; }
.content { flex: 1; display: flex; flex-direction: column; position: relative; }
.watermark { position: absolute; left: 331px; top: 258px; }
.version { font-family: "Liberation Serif", serif; font-weight: 700; fill: #dbd8d1; stroke: #dfddd8; stroke-width: 1px; }
.brand { font-family: "Open Sans", sans-serif; fill: #dedfdf; stroke: #dedfdf; stroke-width: .6px; }
.files { flex: 1; display: grid; grid-template-columns: repeat(5, 155.5px); grid-auto-rows: 128px; align-content: start; padding: 26px 0 0 13px; }
.file { display: flex; flex-direction: column; align-items: center; }
.file svg { width: 94px; height: 75px; }
.file figcaption { margin-top: 9px; padding: 1px 1px 0; line-height: 19px; border: 1px dashed transparent; }
.file.focus figcaption { border-color: #a6a6a8; }
.status { height: 41px; display: flex; padding-right: 2px; }
.count { flex: 1; padding: 12px 0 0 3px; }
.slider { width: 199px; height: 14px; display: flex; align-items: center; margin: 14px 4px 0 0; }
.slider .fill { width: 69px; height: 4px; background: #315b94; border-radius: 2px; }
.slider .handle { width: 14px; height: 14px; border-radius: 50%; background: linear-gradient(#fff, #e2e2e2); box-shadow: 0 0 2px #777; }
.slider .rest { flex: 1; height: 4px; background: #a3a4a4; border-radius: 2px; }
.space { width: 200px; text-align: center; padding-top: 8px; }
.bar { height: 6px; margin-top: 3px; background: #b6b7b9; border: 1px solid #97989a; border-radius: 3px; }
.bar span { display: block; width: 75px; height: 4px; background: #456ca6; border-radius: 2px; }

.dock { position: absolute; left: 530px; bottom: 0; width: 380px; height: 74px; }
.dock-icons { display: flex; align-items: center; height: 60px; padding-left: 13px; gap: 14px; }
.dock-folder { margin-top: 2px; }
.bin { margin-left: 7px; }
.clock { overflow: visible; }
.twelve { font: 11px "Open Sans", sans-serif; letter-spacing: -1px; fill: #3d55e0; }
.shelf { height: 10px; margin-top: 4px; background: #f4f4f4; border-radius: 4px 4px 0 0; display: flex; padding: 5px 0 0 114px; }
.shelf span { width: 5px; height: 5px; border-radius: 50%; background: #3453dc; }
```
